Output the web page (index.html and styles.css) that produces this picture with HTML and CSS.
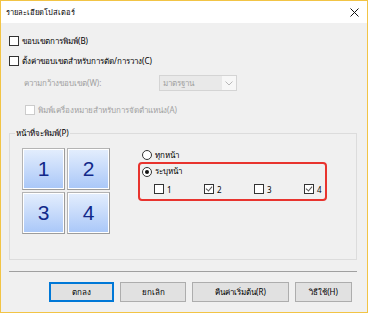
FILE: index.html
```html
<html>
<head>
    <title>รายละเอียดโปสเตอร์</title>
    <link rel="stylesheet" href="styles.css">
</head>
<body>
    <div class="window">
        <div class="titlebar">
            <span class="title">รายละเอียดโปสเตอร์</span>
            <svg class="close" width="9" height="9" viewBox="0 0 9 9">
                <path d="M0.5 0.5 L8.5 8.5 M8.5 0.5 L0.5 8.5" stroke="#111" stroke-width="1" fill="none"/>
            </svg>
        </div>
        <div class="content">
            <div class="row">
                <span class="check"></span>
                <span>ขอบเขตการพิมพ์(B)</span>
            </div>
            <div class="row">
                <span class="check"></span>
                <span>ตั้งค่าขอบเขตสำหรับการตัด/การวาง(C)</span>
            </div>
            <div class="row width-row disabled">
                <span class="field-label">ความกว้างขอบเขต(W):</span>
                <div class="combo">
                    <span class="combo-text">มาตรฐาน</span>
                    <span class="combo-arrow">
                        <svg width="8" height="5" viewBox="0 0 8 5">
                            <path d="M0.5 0.5 L4 4 L7.5 0.5" stroke="#b8b8b8" fill="none"/>
                        </svg>
                    </span>
                </div>
            </div>
            <div class="row marks-row disabled">
                <span class="check"></span>
                <span>พิมพ์เครื่องหมายสำหรับการจัดตำแหน่ง(A)</span>
            </div>

            <fieldset class="group">
                <legend>หน้าที่จะพิมพ์(P)</legend>
                <div class="group-body">
                    <div class="pages">
                        <div class="tile">1</div>
                        <div class="tile">2</div>
                        <div class="tile">3</div>
                        <div class="tile">4</div>
                    </div>
                    <div class="options">
                        <div class="radio-row">
                            <span class="radio"></span>
                            <span>ทุกหน้า</span>
                        </div>
                        <div class="highlight">
                            <div class="radio-row">
                                <span class="radio on"></span>
                                <span>ระบุหน้า</span>
                            </div>
                            <div class="page-checks">
                                <div class="page-check"><span class="check"></span>1</div>
                                <div class="page-check"><span class="check on"></span>2</div>
                                <div class="page-check"><span class="check"></span>3</div>
                                <div class="page-check"><span class="check on"></span>4</div>
                            </div>
                        </div>
                    </div>
                </div>
            </fieldset>

            <div class="separator"></div>

            <div class="buttons">
                <button class="btn btn-ok">ตกลง</button>
                <button class="btn btn-cancel">ยกเลิก</button>
                <button class="btn btn-reset">คืนค่าเริ่มต้น(R)</button>
                <button class="btn btn-help">วิธีใช้(H)</button>
            </div>
        </div>
    </div>
</body>
</html>
```

FILE: styles.css
```css
body {
    margin: 0;
    font-family: Tahoma, "Noto Sans", "DejaVu Sans", sans-serif;
    font-size: 8px;
    color: #000;
}
.window {
    width: 368px;
    height: 313px;
    box-sizing: border-box;
    border: 1px solid #f2c445;
    background: #f0f0f0;
}
.titlebar {
    height: 22px;
    background: #fff;
    display: flex;
    align-items: center;
    justify-content: space-between;
    padding: 0 8px 0 5px;
}
.title {
    font-size: 7.5px;
}
.content {
    padding: 8px 10px 0 8px;
}
.row {
    height: 20px;
    display: flex;
    align-items: center;
    gap: 3px;
}
.check {
    width: 8px;
    height: 8px;
    border: 1px solid #333;
    background: #fff;
    display: inline-block;
    position: relative;
    flex: none;
}
.check.on::after {
    content: "";
    position: absolute;
    left: 2px;
    top: 0px;
    width: 3px;
    height: 5px;
    border-right: 1px solid #555;
    border-bottom: 1px solid #555;
    transform: rotate(40deg);
}
.disabled {
    color: #a0a0a0;
}
.disabled .check {
    border-color: #cccccc;
}
.width-row {
    height: 24px;
    padding-left: 15px;
    gap: 0;
}
.field-label {
    width: 135px;
}
.combo {
    width: 76px;
    height: 14px;
    border: 1px solid #d4d4d4;
    background: #e9e9e9;
    display: flex;
    align-items: center;
}
.combo-text {
    flex: 1;
    padding-left: 3px;
}
.combo-arrow {
    width: 14px;
    height: 14px;
    background: #f7f7f7;
    display: flex;
    align-items: center;
    justify-content: center;
}
.marks-row {
    margin-top: 5px;
    padding-left: 16px;
}
.group {
    margin: 6px 0 0 0;
    padding: 8px 0 25px 12px;
    border: 1px solid #dcdcdc;
    min-width: 0;
}
.group legend {
    margin-left: -7px;
    padding: 0 1px;
    line-height: 14px;
}
.group-body {
    display: flex;
}
.pages {
    display: grid;
    grid-template-columns: 43px 43px;
    grid-template-rows: 42px 42px;
    gap: 2px;
}
.tile {
    box-sizing: border-box;
    border: 1px solid #b4b4b4;
    border-right-color: #9c9c9c;
    border-bottom-color: #9c9c9c;
    box-shadow: inset 0 0 0 1px #fff;
    background: linear-gradient(#e4eefd, #a9c7f8);
    color: #12298a;
    font-family: "Liberation Sans", Arial, sans-serif;
    font-size: 21px;
    display: flex;
    align-items: center;
    justify-content: center;
}
.options {
    margin-left: 28px;
}
.radio-row {
    height: 14px;
    display: flex;
    align-items: center;
    gap: 3px;
    padding-left: 4px;
}
.radio {
    width: 8px;
    height: 8px;
    border: 1px solid #333;
    border-radius: 50%;
    background: #fff;
    position: relative;
    flex: none;
}
.radio.on::after {
    content: "";
    position: absolute;
    left: 2px;
    top: 2px;
    width: 4px;
    height: 4px;
    border-radius: 50%;
    background: #111;
}
.highlight {
    width: 185px;
    border: 2px solid #e8332e;
    border-radius: 4px;
}
.highlight .radio-row {
    height: 15px;
    padding-left: 2px;
}
.page-checks {
    height: 20px;
    display: grid;
    grid-template-columns: repeat(4, 50px);
    padding-left: 14px;
    align-items: center;
}
.page-check {
    display: flex;
    align-items: center;
    gap: 3px;
}
.separator {
    margin-top: 11px;
    border-top: 1px solid #a0a0a0;
}
.buttons {
    display: flex;
    gap: 6px;
    margin-top: 10px;
    padding-left: 40px;
}
.btn {
    height: 20px;
    border: 1px solid #adadad;
    background: #e1e1e1;
    font-family: inherit;
    font-size: 8px;
    padding: 0;
}
.btn-ok {
    width: 65px;
    border: 2px solid #0078d7;
}
.btn-cancel {
    width: 66px;
}
.btn-reset {
    width: 97px;
}
.btn-help {
    width: 57px;
}
```
